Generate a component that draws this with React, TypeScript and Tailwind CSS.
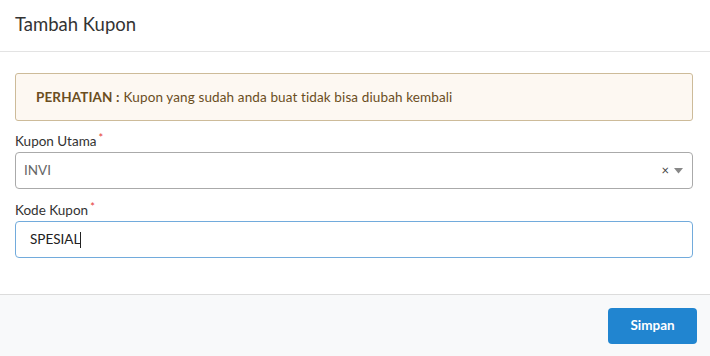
import React from 'react';

const App = () => {
  return (
    <div className="w-[710px] h-[356px] bg-white flex flex-col text-[#333]" style={{ fontFamily: 'Lato, "Open Sans", sans-serif' }}>
      <div className="h-[52px] px-[15px] flex items-center border-b border-[#e3e3e3]">
        <h2 className="text-[18.5px] text-[#333] leading-none pb-[2px]">Tambah Kupon</h2>
      </div>

      <div className="flex-1 pl-[15px] pr-[17px] pt-[21px]">
        <div className="h-[48px] px-[20px] flex items-center rounded-[3px] border border-[#cdbb99] bg-[#fdf8f2] text-[13.5px] tracking-[0.12px] text-[#6b4e1e]">
          <span className="font-bold mr-1">PERHATIAN :</span>
          <span>Kupon yang sudah anda buat tidak bisa diubah kembali</span>
        </div>

        <label className="block mt-[12px] text-[13.5px] text-[#333] leading-[16px]">
          Kupon Utama<span className="text-[#e53935] text-[11px] relative -top-[4px] ml-[2px]">*</span>
        </label>
        <div className="mt-[2px] h-[37px] px-[8px] flex items-center rounded-[4px] border border-[#aaa] bg-white">
          <span className="flex-1 text-[13.5px] text-[#666]">INVI</span>
          <span className="text-[#444] text-[13px] mr-[5px] leading-none">×</span>
          <svg width="9" height="6" viewBox="0 0 9 6" className="mr-[1px]">
            <path d="M0 0 L9 0 L4.5 5.5 Z" fill="#888" />
          </svg>
        </div>

        <label className="block mt-[13px] text-[13.5px] text-[#333] leading-[16px]">
          Kode Kupon<span className="text-[#e53935] text-[11px] relative -top-[4px] ml-[2px]">*</span>
        </label>
        <div className="mt-[2px] h-[37px] px-[14px] flex items-center rounded-[4px] border border-[#72abdc] bg-white">
          <span className="text-[13.5px] text-[#222]">SPESIAL</span>
          <span className="w-px h-[16px] bg-[#222]" />
        </div>
      </div>

      <div className="h-[62px] border-t border-[#dcdcdc] bg-[#f8f9fa] flex items-center justify-end px-[13px]">
        <button className="w-[89px] h-[36px] rounded-[4px] bg-[#2185d0] text-white text-[13.5px] font-bold">Simpan</button>
      </div>
    </div>
  );
};

export default App;
